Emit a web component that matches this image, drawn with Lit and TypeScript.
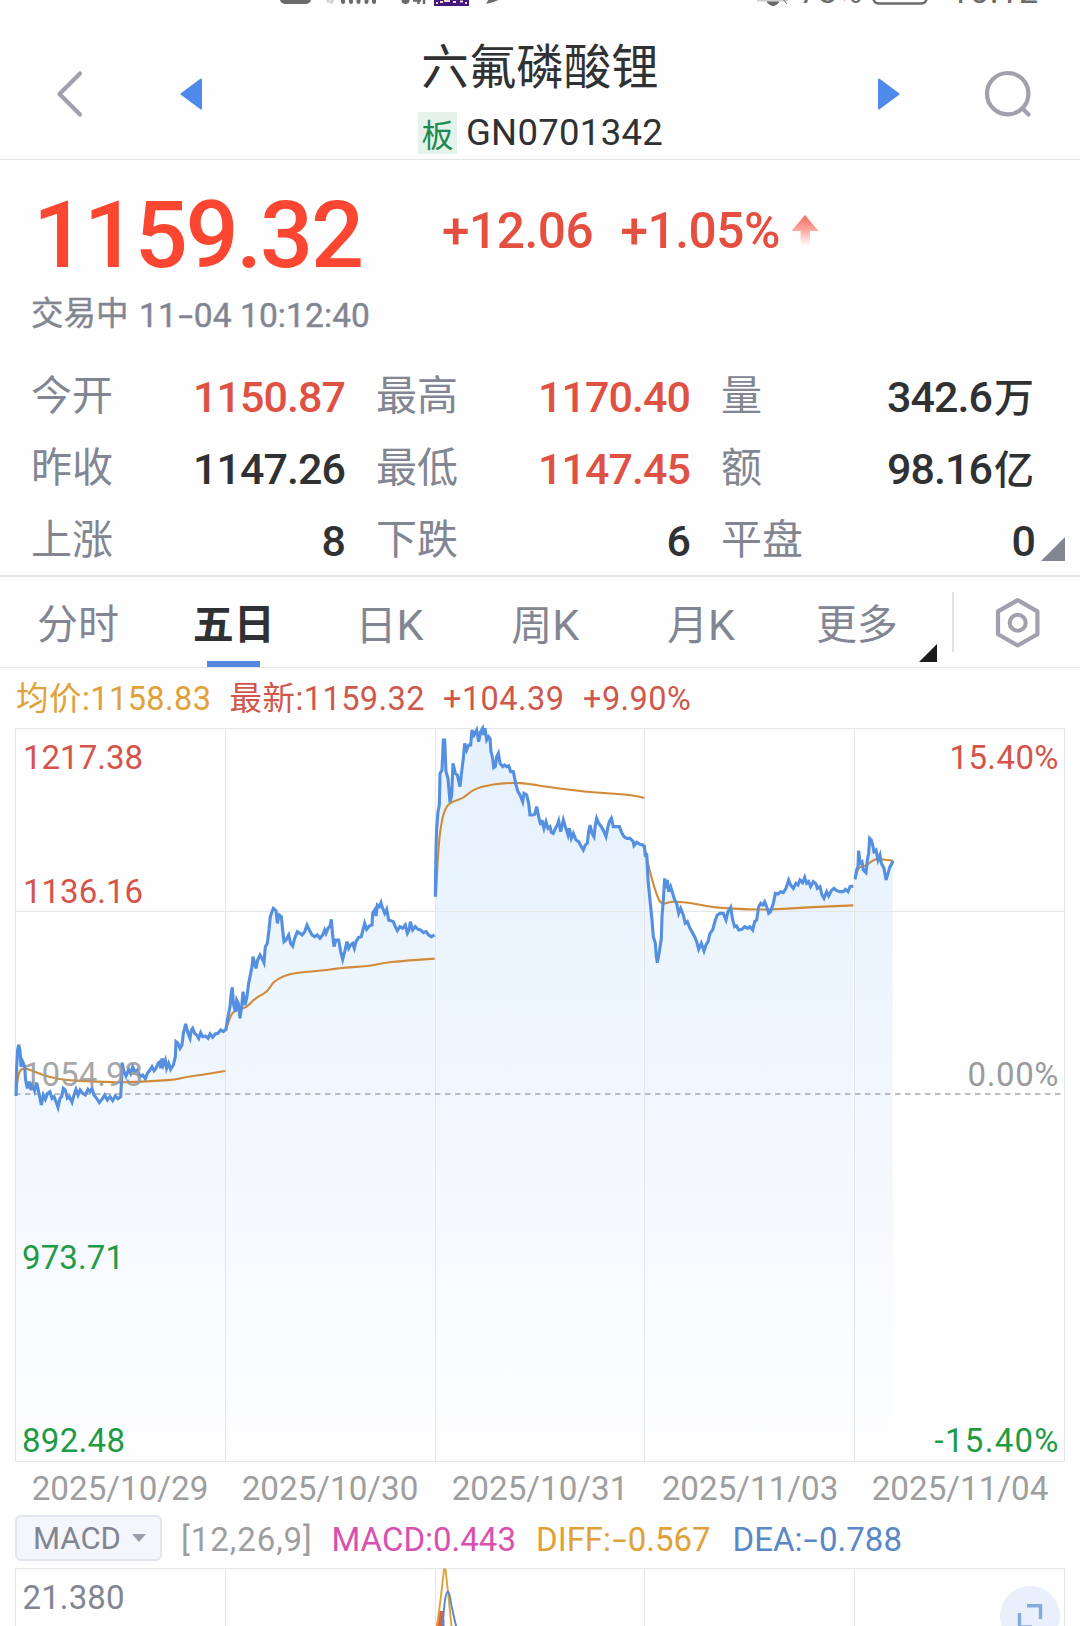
import { LitElement, html, svg, css } from "lit";
import { customElement } from "lit/decorators.js";

type Tone = "up" | "flat";
interface Stat { label: string; value: string; unit?: string; tone: Tone }

const STATS: Stat[] = [
  { label: "今开", value: "1150.87", tone: "up" },
  { label: "最高", value: "1170.40", tone: "up" },
  { label: "量", value: "342.6", unit: "万", tone: "flat" },
  { label: "昨收", value: "1147.26", tone: "flat" },
  { label: "最低", value: "1147.45", tone: "up" },
  { label: "额", value: "98.16", unit: "亿", tone: "flat" },
  { label: "上涨", value: "8", tone: "flat" },
  { label: "下跌", value: "6", tone: "flat" },
  { label: "平盘", value: "0", tone: "flat" },
];

const TABS = ["分时", "五日", "日K", "周K", "月K", "更多"];
const DATES = ["2025/10/29", "2025/10/30", "2025/10/31", "2025/11/03", "2025/11/04"];
const COLUMNS = [15.5, 225.5, 435.5, 644.5, 854.5, 1064.5];

/** One trading day: samples are stored in thirds of a chart unit from an origin. */
interface Day { ox: number; oy: number; price: string; avg: string }

const DAYS: Day[] = [
  {
    ox: 0, oy: 880,
    price: "48,648 50,560 53,510 56,494 60,512 63,560 68,545 74,560 77,600 82,625 88,605 93,630 98,612 104,632 110,608 117,640 124,675 130,645 136,658 143,640 150,635 156,655 162,650 168,665 174,682 180,655 185,650 190,625 196,630 202,655 208,650 216,667 222,645 228,628 234,645 240,630 248,640 256,645 264,628 270,635 276,625 282,645 290,655 298,668 306,658 314,645 322,660 330,650 338,662 346,648 354,656 362,650 365,590 366,548 372,575 378,588 386,568 392,580 398,560 404,575 412,570 420,590 428,585 436,596 442,580 450,570 456,560 462,572 468,565 474,550 480,545 482,565 486,535 490,555 496,540 500,565 506,550 512,568 520,555 526,530 528,485 534,490 540,505 546,495 550,460 557,432 564,460 570,475 574,450 578,445 584,460 590,465 596,475 602,458 608,470 616,468 624,475 630,462 638,472 646,462 654,460 662,450 670,455 678,448",
    avg: "48,640 52,600 60,567 80,565 110,578 150,592 200,600 260,604 320,606 350,607 430,605 480,602 525,599 560,590 610,584 676,573",
  },
  {
    ox: 220, oy: 880,
    price: "17,452 24,410 30,380 33,345 37,322 40,370 46,395 50,360 55,370 60,415 65,380 69,335 75,375 80,355 86,310 92,280 96,260 99,230 104,250 108,265 113,240 120,225 126,235 132,248 136,200 142,190 147,150 151,110 156,95 160,85 168,92 172,130 178,105 184,110 188,150 192,185 198,180 206,165 212,190 218,198 224,175 232,155 240,160 246,165 254,155 261,135 268,150 276,165 284,170 292,165 300,175 308,165 314,150 318,160 324,145 330,138 334,118 338,165 342,200 348,180 356,180 362,215 368,238 374,215 381,185 386,205 392,195 398,190 403,205 408,185 416,172 424,170 430,145 434,130 440,148 448,138 456,135 458,100 464,90 468,108 472,75 478,80 483,68 488,85 494,100 500,88 506,120 512,122 520,125 526,140 532,152 540,140 548,145 556,135 562,160 567,150 571,125 578,150 586,140 594,148 602,150 610,158 618,155 626,165 634,170 644,165",
    avg: "17,452 24,430 35,400 50,390 80,382 100,360 120,347 142,335 160,305 190,288 230,278 320,271 350,265 450,258 490,249 540,243 644,236",
  },
  {
    ox: 420, oy: 715,
    price: "46,545 48,400 50,340 54,290 58,270 60,175 66,165 70,75 74,75 78,170 84,190 90,262 95,240 99,145 106,175 112,180 120,215 125,170 130,130 134,85 140,105 146,90 152,90 156,45 162,60 170,45 176,80 182,50 188,40 191,60 195,40 200,75 206,65 210,70 213,110 218,130 221,158 226,155 230,125 235,115 240,145 248,155 254,150 260,155 266,152 272,170 280,170 284,190 288,210 294,230 300,240 308,260 312,235 320,240 326,265 330,300 338,300 344,298 350,275 356,305 362,330 366,315 372,340 378,320 384,340 390,335 394,352 400,355 406,340 412,330 416,318 422,350 430,315 436,335 444,360 448,340 454,370 460,355 468,375 476,380 484,395 490,405 496,390 502,385 506,350 510,330 516,355 522,365 526,330 530,310 536,325 544,335 552,350 558,365 564,335 568,320 574,310 580,335 590,335 598,335 606,355 612,365 620,370 630,370 640,380 642,392 650,382 660,388 668,390 673,395",
    avg: "48,545 54,400 66,310 80,272 100,258 130,250 160,222 220,207 280,203 320,206 400,218 500,231 600,237 650,243 673,249",
  },
  {
    ox: 630, oy: 820,
    price: "43,75 46,110 50,100 54,180 60,240 66,300 70,350 76,370 79,410 82,428 88,395 94,355 96,290 100,240 104,175 108,205 112,180 116,215 122,200 128,220 134,240 140,250 146,280 152,265 160,285 166,310 172,305 180,325 186,335 194,350 200,365 206,388 214,370 222,393 228,375 234,365 240,340 248,330 256,300 262,285 270,280 280,280 288,300 294,275 302,262 308,300 314,320 320,318 326,330 336,328 344,320 352,325 360,320 368,330 374,305 380,300 386,260 392,250 398,255 404,245 410,260 416,280 422,275 430,250 436,220 444,222 452,215 460,218 468,205 476,180 482,195 490,205 498,190 504,195 510,180 518,188 524,172 530,190 536,185 542,200 550,185 558,192 562,205 570,200 576,225 582,235 590,215 596,228 604,212 612,205 620,212 630,215 640,215 646,208 654,215 660,200 670,198",
    avg: "43,80 56,140 72,200 88,245 100,253 120,245 160,246 200,252 250,263 370,269 440,268 530,262 670,256",
  },
  {
    ox: 630, oy: 820,
    price: "675,178 680,150 684,140 686,92 690,130 696,125 700,150 708,158 712,120 716,100 719,55 724,60 728,75 732,95 738,90 744,120 750,105 754,130 762,145 768,180 774,160 780,140 786,130 788,122",
    avg: "675,178 682,150 690,140 710,138 725,122 745,115 770,120 788,122",
  },
];

const points = (d: Day, raw: string): number[][] =>
  raw.split(" ").map((p) => {
    const [x, y] = p.split(",").map(Number);
    return [d.ox + x / 3, d.oy + y / 3];
  });
const path = (p: number[][]): string =>
  "M" + p.map(([x, y]) => `${x.toFixed(2)} ${y.toFixed(2)}`).join("L");
/** Rounds the corners by running quadratic curves through segment midpoints. */
const smooth = (p: number[][]): string => {
  let d = `M${p[0][0]} ${p[0][1]}`;
  for (let i = 1; i < p.length - 1; i++) {
    const [x, y] = p[i];
    const [nx, ny] = p[i + 1];
    d += `Q${x.toFixed(2)} ${y.toFixed(2)} ${((x + nx) / 2).toFixed(2)} ${((y + ny) / 2).toFixed(2)}`;
  }
  const end = p[p.length - 1];
  return d + `L${end[0]} ${end[1]}`;
};

const BOTTOM = 1461;

@customElement("quote-chart")
class QuoteChart extends LitElement {
  static styles = css`
    :host { display: block; height: 742px; }
    svg { display: block; }
    text { font: 400 33px Roboto, "Liberation Sans", sans-serif; }
    .grid { stroke: #e4e6e8; stroke-width: 1; fill: none; }
    .base { stroke: #a4a8ad; stroke-width: 1.4; stroke-dasharray: 5.4 4.6; }
    .price { fill: none; stroke: #5590e0; stroke-width: 3.1; stroke-linejoin: miter; }
    .avg { fill: none; stroke: #d18a38; stroke-width: 2.1; stroke-linejoin: round; }
    .up { fill: #d4544a; }
    .zero { fill: #9a9b9d; }
    .over { fill-opacity: 0.9; }
    .down { fill: #1f9a45; }
    .end { text-anchor: end; }
  `;
  render() {
    const days = DAYS.map((d) => ({ price: points(d, d.price), avg: points(d, d.avg) }));
    return html`<svg width="1080" height="742" viewBox="0 728 1080 742" overflow="visible">
      <defs>
        <linearGradient id="fade" gradientUnits="userSpaceOnUse" x1="0" y1="728" x2="0" y2="1461">
          <stop offset="0" stop-color="#e5f1fe"></stop>
          <stop offset="0.5" stop-color="#f1f7fe"></stop>
          <stop offset="1" stop-color="#fefeff"></stop>
        </linearGradient>
      </defs>
      ${days.map(({ price: p }) => svg`<path fill="url(#fade)"
        d="${path(p)}L${p[p.length - 1][0]} ${BOTTOM}L${p[0][0]} ${BOTTOM}Z"></path>`)}
      <path class="grid" d="M15 728.5H1065M15 911.5H1065M15 1461.5H1065"></path>
      ${COLUMNS.map((x) => svg`<path class="grid" d="M${x} 728V1461"></path>`)}
      <path class="base" d="M15 1094H1064"></path>
      ${days.map(({ avg }) => svg`<path class="avg" d=${smooth(avg)}></path>`)}
      ${days.map(({ price }) => svg`<path class="price" d=${path(price)}></path>`)}
      <text class="zero over" x="23" y="1085.5" textLength="120">1054.93</text>
      <text class="up" x="23" y="769" textLength="120">1217.38</text>
      <text class="up" x="23" y="903" textLength="120">1136.16</text>
      <text class="down" x="22" y="1269" textLength="102">973.71</text>
      <text class="down" x="22" y="1452" textLength="103">892.48</text>
      <text class="up end" x="1058.5" y="769" textLength="109">15.40%</text>
      <text class="zero end" x="1058.5" y="1086" textLength="91">0.00%</text>
      <text class="down end" x="1058.5" y="1452" textLength="124">-15.40%</text>
    </svg>`;
  }
}

@customElement("macd-chart")
class MacdChart extends LitElement {
  static styles = css`
    :host { display: block; height: 58px; overflow: hidden; }
    svg { display: block; }
    text { font: 400 33px Roboto, "Liberation Sans", sans-serif; fill: #828692; }
    .grid { stroke: #e4e6e8; stroke-width: 1; fill: none; }
    .line { fill: none; stroke-width: 1.9; stroke-linejoin: round; }
    .diff { stroke: #dfa23a; }
    .dea { stroke: #5888c4; }
    .badge { fill: #e9f0fb; }
    .corner { fill: none; stroke: #85a9dc; stroke-width: 3.4; }
  `;
  render() {
    return html`<svg width="1080" height="58" viewBox="0 1568 1080 58">
      <path class="grid" d="M15 1568.5H1065"></path>
      ${COLUMNS.map((x) => svg`<path class="grid" d="M${x} 1568V1626"></path>`)}
      <path fill="#e0603a" d="M436 1626L439.5 1611H443V1626Z"></path>
      <path fill="#9a6a9a" d="M442.5 1626V1613L444.5 1620V1626Z"></path>
      <path class="line diff" d="M437 1626L440.5 1600L444 1569.5H445.5L448 1592L451.5 1626"></path>
      <path class="line dea" d="M442.5 1626L444.5 1604Q446 1591.500 448 1591.500Q449.500 1592 451.500 1606L456.500 1628"></path>
      <text x="22.500" y="1609" textLength="102">21.380</text>
      <circle class="badge" cx="1030" cy="1616" r="30"></circle>
      <path class="corner" d="M1027 1605.700H1040.500V1619M1019.500 1613V1627H1032"></path>
    </svg>`;
  }
}

const dash = html`<span class="dash">-</span>`;

@customElement("app-root")
class AppRoot extends LitElement {
  static styles = css`
    :host {
      display: block; width: 1080px; height: 1626px; overflow: hidden; background: #fefefe;
      font-family: Roboto, "Noto Sans CJK SC", sans-serif; color: #303133;
    }
    * { box-sizing: border-box; }
    .status { display: block; }
    .status text { font: 400 34px Roboto, sans-serif; fill: #6b6b6b; }
    .dash { display: inline-block; transform: scaleX(1.55); margin: 0 3.5px 0 4px; }
    .head { display: flex; height: 154px; border-bottom: 1px solid #e4e5e6; }
    .side { width: 400px; flex: none; }
    .side svg { display: block; }
    .mid { flex: 1; display: flex; flex-direction: column; align-items: center; padding-top: 30px; }
    .name { font-size: 47.5px; line-height: 65px; white-space: nowrap; }
    .code { display: flex; align-items: center; gap: 9px; margin-top: 11px; font-size: 36.5px; letter-spacing: 0.3px; line-height: 42px; margin-left: 1px; }
    .tag { width: 39px; height: 42px; background: #e5f2ec; color: #1f8a50; font-size: 32px; line-height: 49px; text-align: center; letter-spacing: 0; }
    .quote { height: 417px; border-bottom: 2px solid #e3e6e9; padding: 28px 46px 0 31px; position: relative; }
    .top { display: flex; height: 95px; }
    .last { width: 411px; padding-left: 2px; font-size: 93.500px; font-weight: 500; line-height: 95px; letter-spacing: -2.300px; color: #fb4632; }
    .delta { font-size: 49.500px; font-weight: 500; line-height: 86px; letter-spacing: -0.450px; color: #e44f40; white-space: pre; display: flex; }
    .delta span { margin-right: 27.500px; }
    .delta svg { margin: 27px 0 0 -16px; }
    .time { display: flex; align-items: center; height: 42px; margin-top: 11px; color: #828692; }
    .time .cj { font-size: 32.500px; line-height: 40px; margin-top: -3px; -webkit-text-stroke: 0.400px #828692; }
    .time .nu { font-size: 33.500px; letter-spacing: 0.100px; margin-left: 10.500px; -webkit-text-stroke: 0.400px #828692; }
    .stats { display: grid; grid-template-columns: repeat(3, 313px); column-gap: 32px; grid-auto-rows: 72.200px; margin-top: 25px; margin-right: -20px; }
    .stat { display: flex; justify-content: space-between; line-height: 72px; white-space: nowrap; }
    .label { font-size: 41px; line-height: 71px; color: #828692; }
    .value { font-size: 43px; font-weight: 500; letter-spacing: -0.950px; margin-right: -1px; }
    .unit { font-size: 40px; letter-spacing: 0; margin: 0 1px 0 2px; }
    .up { color: #de5143; }
    .fold { position: absolute; right: 15px; bottom: 14px; }
    .tabs { display: flex; height: 91px; border-bottom: 1px solid #e4e6e8; }
    .tab { width: 155.800px; display: flex; flex-direction: column; align-items: center; justify-content: space-between; font-size: 41px; line-height: 96px; height: 90px; color: #828692; }
    .tab .k { font-size: 43px; }
    .tab.on { color: #303133; font-weight: 700; }
    .tab.on::after { content: ""; width: 53px; height: 6px; background: #5488de; margin-top: -4px; flex: none; }
    .tools { flex: none; width: 144px; }
    .tabtext { height: 88px; }
    .legend { display: flex; height: 60px; padding: 1px 0 0 16px; line-height: 61px; font-size: 32.500px; letter-spacing: 0.450px; color: #cf574b; white-space: nowrap; }
    .legend .avg { color: #dfa138; }
    .legend span { flex: none; }
    .l1 { width: 213.500px; } .l2 { width: 213.500px; } .l3 { width: 140px; }
    .dates { display: grid; grid-template-columns: repeat(5, 210px); margin-left: 15px; height: 45px; margin-top: -8px; line-height: 54px; text-align: center; font-size: 33.200px; color: #9e9e9e; }
    .macd { display: flex; align-items: center; height: 61px; padding-left: 15px; font-size: 33px; white-space: nowrap; line-height: 40px; }
    .macd > .t { padding-top: 4px; }
    .pick { display: flex; align-items: center; gap: 11px; width: 147px; height: 46px; border: 2px solid #e3e5ee; border-radius: 6px; background: #f4f6fb; color: #828692; font-size: 31px; padding-left: 16px; margin-right: 19px; }
    .pick span { padding-top: 3px; }
    .arg { color: #9e9e9e; width: 150.500px; letter-spacing: 0.950px; }
    .m1 { color: #d950ae; width: 204.500px; } .m2 { color: #dfa138; width: 196.500px; } .m3 { color: #5a87c6; }
  `;

  render() {
    return html`
      <svg class="status" width="1080" height="6" viewBox="0 0 1080 6">
        <rect x="280" y="-20" width="31" height="24" rx="5" fill="#6b6b6b"></rect>
        <path d="M328 0V2.500M333 0L330.500 3.500" stroke="#cfcfcf" stroke-width="3"></path>
        <path d="M343 -4V2M351 -4V2M358.500 -4V2M366.500 -4V2M374 -4V2" stroke="#6b6b6b" stroke-width="4" stroke-linecap="round"></path>
        <circle cx="405.500" cy="0" r="4" fill="#6b6b6b"></circle>
        <path d="M413 0.500H421M418.500 -3V4M424 -3V4" stroke="#6b6b6b" stroke-width="2.500"></path>
        <rect x="434" y="-10" width="35" height="16" fill="#43187e"></rect>
        <path d="M436 3H438M440 2H443M444 1H450M453 2H456M460 1.500H463M465 3H467" stroke="#f0d9c8" stroke-width="2"></path>
        <path d="M486 4L490 -3H503Q497 2 486 4Z" fill="#6b6b6b"></path>
        <path d="M757 0.500H788" stroke="#cfcfcf" stroke-width="2"></path>
        <path d="M767 2H779Q773 9 767 2ZM782 -2L787 4" fill="#6b6b6b" stroke="#6b6b6b"></path>
        <text x="799" y="2.500">78%</text>
        <rect x="873.500" y="-20" width="53" height="23.500" rx="5" fill="none" stroke="#6b6b6b" stroke-width="2.500"></rect>
        <text x="950" y="2.500" textLength="88">10:12</text>
      </svg>
      <header class="head">
        <div class="side">
          <svg width="400" height="153" viewBox="0 6 400 153">
            <path d="M80 73.500L59.500 94L80 114.500" fill="none" stroke="#a0a1ac" stroke-width="4.200" stroke-linecap="round" stroke-linejoin="round"></path>
            <path d="M201 79.500V108.500L181.500 94Z" fill="#4f8aea" stroke="#4f8aea" stroke-width="2" stroke-linejoin="round"></path>
          </svg>
        </div>
        <div class="mid">
          <div class="name">六氟磷酸锂</div>
          <div class="code"><span class="tag">板</span><span>GN0701342</span></div>
        </div>
        <div class="side">
          <svg width="400" height="153" viewBox="680 6 400 153">
            <path d="M879 79.500V108.500L898.500 94Z" fill="#4f8aea" stroke="#4f8aea" stroke-width="2" stroke-linejoin="round"></path>
            <circle cx="1007.700" cy="93.700" r="20.700" fill="none" stroke="#a0a1ac" stroke-width="4.200"></circle>
            <path d="M1022.500 108.500L1028.500 114.500" stroke="#a0a1ac" stroke-width="4.200" stroke-linecap="round"></path>
          </svg>
        </div>
      </header>

      <section class="quote">
        <div class="top">
          <div class="last">1159.32</div>
          <div class="delta"><span>+12.06</span><span>+1.05%</span>
            <svg width="28" height="30" viewBox="0 0 28 30">
              <defs><linearGradient id="rise" x1="0" y1="0" x2="0" y2="1">
                <stop offset="0" stop-color="#f76a5e"></stop><stop offset="0.500" stop-color="#fba79f"></stop><stop offset="1" stop-color="#fffafa"></stop>
              </linearGradient></defs>
              <path d="M14 0L27.500 16H19V30H9.500V16H0.500Z" fill="url(#rise)"></path>
            </svg>
          </div>
        </div>
        <div class="time"><span class="cj">交易中</span><span class="nu">11${dash}04 10:12:40</span></div>
        <div class="stats">
          ${STATS.map((s) => html`<div class="stat">
            <span class="label">${s.label}</span>
            <span class="value ${s.tone}">${s.value}${s.unit ? html`<span class="unit">${s.unit}</span>` : ""}</span>
          </div>`)}
        </div>
        <svg class="fold" width="24" height="24"><path d="M24 0V24H0Z" fill="#828692"></path></svg>
      </section>

      <nav class="tabs">
        ${TABS.map((t) => html`<div class="tab ${t === "五日" ? "on" : ""}">
          <span class="tabtext">${t.endsWith("K") ? html`${t[0]}<span class="k">K</span>` : t}</span>
        </div>`)}
        <svg class="tools" width="144" height="90" viewBox="935 577 144 90" overflow="visible">
          <path d="M937 644V662H919Z" fill="#1c1c1e"></path>
          <path d="M953 592V652" stroke="#e2e3e7" stroke-width="2"></path>
          <path d="M1017.700 600.200L1037.400 611.300V634.200L1017.700 645.500L998 634.200V611.300Z" fill="none" stroke="#a0a1ac" stroke-width="4.200" stroke-linejoin="round"></path>
          <circle cx="1017.700" cy="622.800" r="8" fill="none" stroke="#a0a1ac" stroke-width="4"></circle>
        </svg>
      </nav>

      <div class="legend">
        <span class="l1 avg">均价:1158.83</span><span class="l2">最新:1159.32</span><span class="l3">+104.39</span><span>+9.90%</span>
      </div>
      <quote-chart></quote-chart>
      <div class="dates">${DATES.map((d) => html`<span>${d}</span>`)}</div>
      <div class="macd">
        <span class="pick"><span>MACD</span><svg width="14" height="8"><path d="M0 0H14L7 8Z" fill="#9b9ea9"></path></svg></span>
        <span class="t arg">[12,26,9]</span>
        <span class="t m1">MACD:0.443</span><span class="t m2">DIFF:${dash}0.567</span><span class="t m3">DEA:${dash}0.788</span>
      </div>
      <macd-chart></macd-chart>
    `;
  }
}
